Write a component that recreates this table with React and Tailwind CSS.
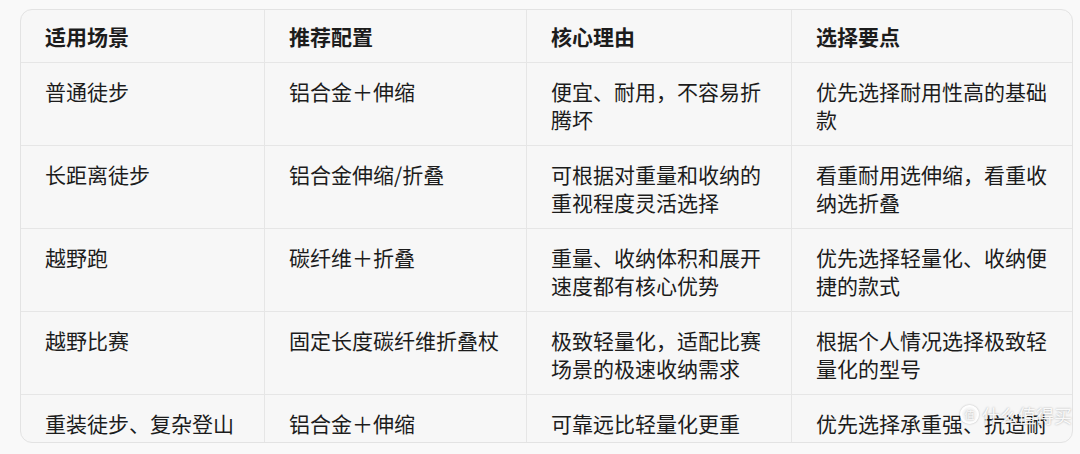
const rows = [
  ['普通徒步', '铝合金＋伸缩', '便宜、耐用，不容易折腾坏', '优先选择耐用性高的基础款'],
  ['长距离徒步', '铝合金伸缩/折叠', '可根据对重量和收纳的重视程度灵活选择', '看重耐用选伸缩，看重收纳选折叠'],
  ['越野跑', '碳纤维＋折叠', '重量、收纳体积和展开速度都有核心优势', '优先选择轻量化、收纳便捷的款式'],
  ['越野比赛', '固定长度碳纤维折叠杖', '极致轻量化，适配比赛场景的极速收纳需求', '根据个人情况选择极致轻量化的型号'],
  ['重装徒步、复杂登山', '铝合金＋伸缩', '可靠远比轻量化更重要，铝合金更抗造', '优先选择承重强、抗造耐用的款式'],
];

const cols = 'grid grid-cols-[243px_262px_265px_1fr]';

export default function App() {
  return (
    <div
      className="w-[1080px] h-[454px] bg-[#f9f9f9] pt-[9px] pl-[20px] overflow-hidden relative"
      style={{ fontFamily: '"Noto Sans CJK SC", "Noto Sans", sans-serif' }}
    >
      <div className="w-[1053px] h-[434px] border border-[#e3e3e3] rounded-[12px] bg-[#f7f7f7] overflow-hidden text-[21px] leading-[28px] text-[#1c1c1c]">
        <div className={cols}>
          {['适用场景', '推荐配置', '核心理由', '选择要点'].map((h, i) => (
            <div key={h} className={`px-6 py-3 font-bold ${i > 0 ? 'border-l border-[#e6e6e6]' : ''}`}>
              {h}
            </div>
          ))}
        </div>
        {rows.map((r, ri) => (
          <div key={ri} className={`${cols} border-t border-[#e6e6e6]`}>
            {r.map((c, i) => (
              <div key={i} className={`pl-6 pr-5 pt-[14px] pb-[12px] min-h-[82px] ${i > 0 ? 'border-l border-[#e6e6e6]' : ''}`}>
                {c}
              </div>
            ))}
          </div>
        ))}
      </div>

      {/* watermark */}
      <div className="absolute left-[960px] top-[405px] flex items-center gap-[3px] text-white/90 [text-shadow:0_0_2px_rgba(0,0,0,0.35)]">
        <div className="w-[19px] h-[19px] rounded-full border-2 border-white/90 flex items-center justify-center text-[10px] leading-none shadow-[0_0_2px_rgba(0,0,0,0.3)]">
          值
        </div>
        <span className="text-[18px] leading-none">什么值得买</span>
      </div>
    </div>
  );
}
